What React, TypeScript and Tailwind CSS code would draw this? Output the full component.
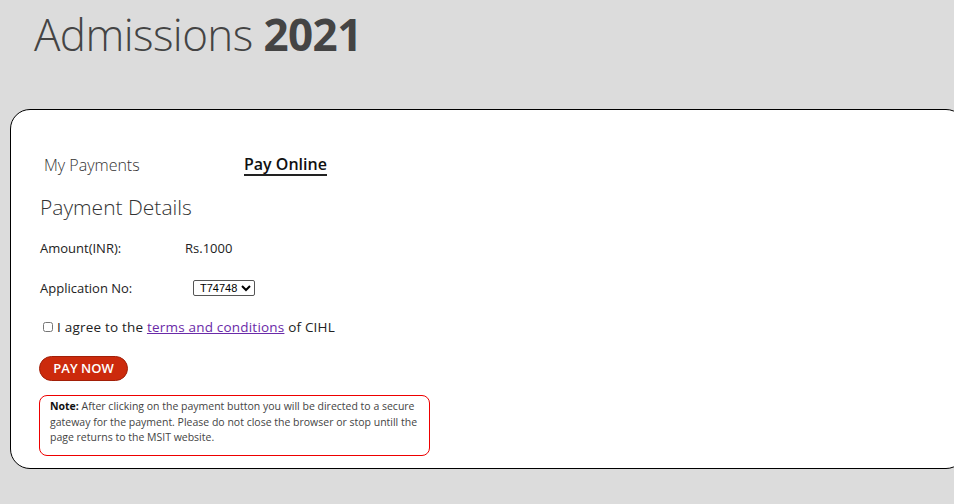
import React from 'react';

const font = { fontFamily: '"Open Sans", "Noto Sans", sans-serif' };

export default function App() {
  return (
    <div className="min-h-screen w-full bg-[#dcdcdc] overflow-hidden" style={font}>
      <h1 className="pl-[34px] pt-[6px] text-[44px] leading-[56px] font-light text-[#444] tracking-[-0.6px]">
        Admissions <span className="font-bold">2021</span>
      </h1>

      <div className="ml-[10px] mt-[47px] w-[956px] h-[360px] bg-white border border-black rounded-[20px] pl-[28px] pt-[44px]">
        <div className="flex items-end text-[16px] leading-[22px]">
          <span className="ml-[5px] w-[200px] font-light text-[#333]">My Payments</span>
          <span className="font-semibold text-[#111] border-b-2 border-[#222] leading-[20px]">Pay Online</span>
        </div>

        <h2 className="mt-[17px] ml-[1px] text-[21px] leading-[28px] font-light text-[#333]">Payment Details</h2>

        <div className="mt-[18px] ml-[1px] flex text-[13px] leading-[18px] text-[#222]">
          <span className="w-[145px]">Amount(INR):</span>
          <span>Rs.1000</span>
        </div>

        <div className="mt-[22px] ml-[1px] flex items-center text-[13px] leading-[18px] text-[#222]">
          <span className="w-[153px]">Application No:</span>
          <select className="h-[16px] border border-[#555] rounded-[2px] text-[11px] leading-[12px] pl-[2px] text-black" style={{ fontFamily: '"Liberation Sans", Arial, sans-serif' }}>
            <option>T74748</option>
          </select>
        </div>

        <div className="mt-[21px] flex items-center text-[13.5px] leading-[18px] text-[#222] tracking-[0.2px]">
          <input type="checkbox" className="ml-[4px] mr-[4px] w-[10px] h-[10px]" />
          <span>
            I agree to the{' '}
            <a href="#" className="text-[#6a2aa8] underline">terms and conditions</a> of CIHL
          </span>
        </div>

        <button className="mt-[20px] h-[25px] w-[89px] rounded-full bg-[#cc2a0c] border border-[#a21f08] text-white text-[13px] font-semibold">
          PAY NOW
        </button>

        <div className="mt-[14px] w-[391px] border border-[#ee0000] rounded-[8px] px-[10px] pt-[3px] pb-[9px] text-[10.5px] leading-[15.5px] text-[#444]">
          <b className="text-[#111]">Note:</b> After clicking on the payment button you will be directed to a secure gateway for the payment. Please do not close the browser or stop untill the page returns to the MSIT website.
        </div>
      </div>
    </div>
  );
}
